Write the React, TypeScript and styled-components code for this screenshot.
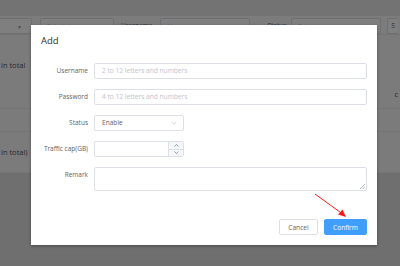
import React from "react";
import styled, { createGlobalStyle } from "styled-components";

const Global = createGlobalStyle`
  html, body { margin: 0; padding: 0; }
  body { width: 400px; height: 266px; overflow: hidden; font-family: "Open Sans", "Noto Sans", sans-serif; }
  * { box-sizing: border-box; }
`;

const Page = styled.div`
  position: relative;
  width: 400px;
  height: 266px;
  overflow: hidden;
  background: #dedede;
  display: flex;
  flex-direction: column;
`;

const Header = styled.div`
  height: 16px;
  background: #e6e6e6;
  flex: none;
`;

const FilterBar = styled.div`
  height: 19px;
  flex: none;
  background: #f8f8f8;
  border-bottom: 1px solid #e6e6e6;
  display: flex;
  align-items: flex-start;
  padding-top: 2px;
  white-space: nowrap;
`;

const FilterBox = styled.div<{ $w: number; $ml: number }>`
  position: relative;
  flex: none;
  width: ${(p) => p.$w}px;
  margin-left: ${(p) => p.$ml}px;
  height: 16px;
  border: 1px solid #dcdfe6;
  border-radius: 2px;
  background: #fff;
  font-size: 6.5px;
  color: #c0c4cc;
  display: flex;
  align-items: center;
  padding-left: 6px;
`;

const Caret = styled.span<{ $right: number }>`
  position: absolute;
  right: ${(p) => p.$right}px;
  top: 5px;
  font-size: 5px;
  color: #909399;
`;

const FilterLabel = styled.span<{ $ml: number }>`
  flex: none;
  margin-left: ${(p) => p.$ml}px;
  font-size: 6.5px;
  line-height: 16px;
  color: #606266;
`;

const FilterButton = styled.div<{ $ml: number }>`
  flex: none;
  margin-left: ${(p) => p.$ml}px;
  width: 11px;
  height: 16px;
  border: 1px solid #dcdfe6;
  border-right: none;
  border-radius: 2px 0 0 2px;
  background: #fff;
  font-size: 6.5px;
  line-height: 14px;
  padding-left: 3px;
  color: #606266;
`;

const TableRow = styled.div<{ $h: number }>`
  height: ${(p) => p.$h}px;
  flex: none;
  background: #f6f6f6;
  border-bottom: 1px solid #e9e9e9;
  display: flex;
  justify-content: space-between;
  position: relative;
`;

const CellText = styled.span<{ $top: number; $mr?: number; $ml?: number }>`
  margin-top: ${(p) => p.$top}px;
  margin-left: ${(p) => p.$ml ?? 0}px;
  margin-right: ${(p) => p.$mr ?? 0}px;
  font-size: 7.5px;
  line-height: 10px;
  height: 10px;
  color: #555;
  white-space: nowrap;
`;

const Overlay = styled.div`
  position: absolute;
  inset: 0;
  background: rgba(0, 0, 0, 0.5);
`;

const Dialog = styled.div`
  position: absolute;
  left: 31px;
  top: 25px;
  width: 346px;
  height: 220px;
  background: #fff;
  box-shadow: 0 1px 3px rgba(0, 0, 0, 0.35);
  display: flex;
  flex-direction: column;
`;

const Title = styled.div`
  height: 30px;
  padding-left: 10px;
  display: flex;
  align-items: center;
  font-size: 9.5px;
  color: #303133;
`;

const Form = styled.div`
  padding-top: 8px;
  padding-right: 10px;
  display: flex;
  flex-direction: column;
  gap: 10px;
`;

const Row = styled.div<{ $top?: boolean }>`
  display: grid;
  grid-template-columns: 57px 1fr;
  column-gap: 6px;
  align-items: ${(p) => (p.$top ? "start" : "center")};
`;

const Label = styled.label`
  text-align: right;
  font-size: 6.5px;
  line-height: 16px;
  color: #606266;
  white-space: nowrap;
`;

const Input = styled.div<{ $w?: number }>`
  position: relative;
  width: ${(p) => (p.$w ? `${p.$w}px` : "100%")};
  height: 16px;
  border: 1px solid #dcdfe6;
  border-radius: 2px;
  padding-left: 7px;
  font-size: 6.6px;
  line-height: 14px;
  color: #c0c4cc;
  white-space: nowrap;
  overflow: hidden;
`;

const Value = styled.span`
  color: #606266;
`;

const Chevron = styled.svg`
  position: absolute;
  right: 6px;
  top: 5px;
`;

const Stepper = styled.div`
  position: absolute;
  right: 0;
  top: 0;
  bottom: 0;
  width: 15px;
  border-left: 1px solid #dcdfe6;
  display: flex;
  flex-direction: column;
`;

const StepHalf = styled.div<{ $last?: boolean }>`
  flex: 1;
  background: #f5f7fa;
  border-bottom: ${(p) => (p.$last ? "none" : "1px solid #dcdfe6")};
  display: flex;
  align-items: center;
  justify-content: center;
`;

const TextArea = styled.div`
  position: relative;
  height: 24px;
  border: 1px solid #dcdfe6;
  border-radius: 2px;
`;

const Grip = styled.svg`
  position: absolute;
  right: 1px;
  bottom: 1px;
`;

const Footer = styled.div`
  margin-top: auto;
  padding: 0 10px 10px 0;
  display: flex;
  justify-content: flex-end;
  gap: 6px;
`;

const Button = styled.div<{ $primary?: boolean; $w: number }>`
  width: ${(p) => p.$w}px;
  height: 16px;
  border-radius: 2px;
  border: 1px solid ${(p) => (p.$primary ? "#409eff" : "#dcdfe6")};
  background: ${(p) => (p.$primary ? "#409eff" : "#fff")};
  color: ${(p) => (p.$primary ? "#fff" : "#606266")};
  font-size: 6.6px;
  display: flex;
  align-items: center;
  justify-content: center;
`;

const Arrow = styled.svg`
  position: absolute;
  left: 280px;
  top: 165px;
  pointer-events: none;
`;

const Down = ({ size = 6, color = "#c0c4cc" }: { size?: number; color?: string }) => (
  <svg width={size} height={size * 0.6} viewBox="0 0 10 6">
    <path d="M1 1 L5 5 L9 1" fill="none" stroke={color} strokeWidth="1.2" />
  </svg>
);

const Up = ({ size = 6, color = "#c0c4cc" }: { size?: number; color?: string }) => (
  <svg width={size} height={size * 0.6} viewBox="0 0 10 6">
    <path d="M1 5 L5 1 L9 5" fill="none" stroke={color} strokeWidth="1.2" />
  </svg>
);

export default function App() {
  return (
    <>
      <Global />
      <Page>
        <Header />
        <FilterBar>
          <FilterBox $w={42} $ml={-10}>
            <Caret $right={9}>▼</Caret>
          </FilterBox>
          <FilterBox $w={74} $ml={8}>Select date</FilterBox>
          <FilterLabel $ml={7}>Username</FilterLabel>
          <FilterBox $w={90} $ml={8}>Username</FilterBox>
          <FilterLabel $ml={17}>Status</FilterLabel>
          <FilterBox $w={90} $ml={5}>
            Select
            <Caret $right={6}>▼</Caret>
          </FilterBox>
          <FilterButton $ml={6}>S</FilterButton>
        </FilterBar>
        <TableRow $h={74}>
          <CellText $top={25} $ml={1}>in total</CellText>
          <CellText $top={54} $mr={2}>c</CellText>
        </TableRow>
        <TableRow $h={23} />
        <TableRow $h={41}>
          <CellText $top={15} $ml={1}>in total)</CellText>
        </TableRow>
        <Overlay />
        <Dialog>
          <Title>Add</Title>
          <Form>
            <Row>
              <Label>Username</Label>
              <Input>2 to 12 letters and numbers</Input>
            </Row>
            <Row>
              <Label>Password</Label>
              <Input>4 to 12 letters and numbers</Input>
            </Row>
            <Row>
              <Label>Status</Label>
              <Input $w={90}>
                <Value>Enable</Value>
                <Chevron width="6" height="4" viewBox="0 0 10 6">
                  <path d="M1 1 L5 5 L9 1" fill="none" stroke="#c0c4cc" strokeWidth="1.2" />
                </Chevron>
              </Input>
            </Row>
            <Row>
              <Label>Traffic cap(GB)</Label>
              <Input $w={90}>
                <Stepper>
                  <StepHalf>
                    <Up size={5} color="#606266" />
                  </StepHalf>
                  <StepHalf $last>
                    <Down size={5} color="#606266" />
                  </StepHalf>
                </Stepper>
              </Input>
            </Row>
            <Row $top>
              <Label>Remark</Label>
              <TextArea>
                <Grip width="5" height="5" viewBox="0 0 5 5">
                  <path d="M5 0 L0 5 M5 2.5 L2.5 5" stroke="#999" strokeWidth="0.7" />
                </Grip>
              </TextArea>
            </Row>
          </Form>
          <Footer>
            <Button $w={39}>Cancel</Button>
            <Button $w={43} $primary>Confirm</Button>
          </Footer>
          <Arrow width="40" height="32" viewBox="0 0 40 32">
            <line x1="4" y1="4" x2="31" y2="23.5" stroke="#ff1a1a" strokeWidth="1" />
            <polygon points="35,27 27,24.5 31.5,19.5" fill="#ff1a1a" />
          </Arrow>
        </Dialog>
      </Page>
    </>
  );
}
